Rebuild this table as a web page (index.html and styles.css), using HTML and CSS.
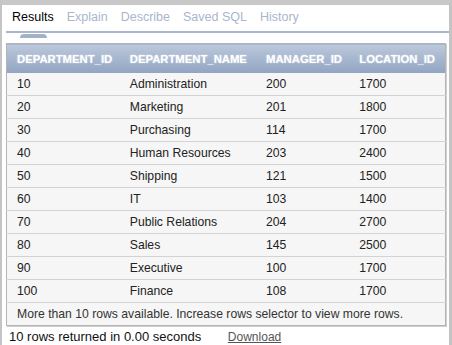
FILE: index.html
```html
<!DOCTYPE html>
<html lang="en">
<head>
  <meta charset="UTF-8">
  <title>Results</title>
  <link rel="stylesheet" href="styles.css">
</head>
<body>
  <div class="frame">
    <nav class="tabs">
      <span class="tab active">Results</span>
      <span class="tab">Explain</span>
      <span class="tab">Describe</span>
      <span class="tab">Saved SQL</span>
      <span class="tab">History</span>
    </nav>

    <table class="results">
      <colgroup>
        <col class="c1"><col class="c2"><col class="c3"><col class="c4">
      </colgroup>
      <thead>
        <tr>
          <th>DEPARTMENT_ID</th>
          <th>DEPARTMENT_NAME</th>
          <th>MANAGER_ID</th>
          <th>LOCATION_ID</th>
        </tr>
      </thead>
      <tbody>
        <tr><td>10</td><td>Administration</td><td>200</td><td>1700</td></tr>
        <tr><td>20</td><td>Marketing</td><td>201</td><td>1800</td></tr>
        <tr><td>30</td><td>Purchasing</td><td>114</td><td>1700</td></tr>
        <tr><td>40</td><td>Human Resources</td><td>203</td><td>2400</td></tr>
        <tr><td>50</td><td>Shipping</td><td>121</td><td>1500</td></tr>
        <tr><td>60</td><td>IT</td><td>103</td><td>1400</td></tr>
        <tr><td>70</td><td>Public Relations</td><td>204</td><td>2700</td></tr>
        <tr><td>80</td><td>Sales</td><td>145</td><td>2500</td></tr>
        <tr><td>90</td><td>Executive</td><td>100</td><td>1700</td></tr>
        <tr><td>100</td><td>Finance</td><td>108</td><td>1700</td></tr>
        <tr class="more"><td colspan="4">More than 10 rows available. Increase rows selector to view more rows.</td></tr>
      </tbody>
    </table>

    <div class="footer">
      <span>10 rows returned in 0.00 seconds</span>
      <a href="#" class="download">Download</a>
    </div>
  </div>
</body>
</html>
```

FILE: styles.css
```css
body {
  margin: 0;
  padding: 0;
  background: #fff;
  font-family: 'Liberation Sans', Arial, sans-serif;
  color: #222;
}

.frame {
  box-sizing: border-box;
  height: 345px;
  border-top: 5px solid #c8c8c8;
  border-left: 2px solid #c4c4c4;
  border-right: 3px solid #c4c4c4;
  background: #fff;
}

.tabs {
  position: relative;
  display: flex;
  gap: 13px;
  height: 21px;
  padding: 5px 0 0 6px;
  margin-left: 4px;
  border-bottom: 2px solid #a8b5ca;
  font-size: 12.5px;
  line-height: 14px;
}

.tab {
  position: relative;
  color: #a9b6cb;
}

.tab.active {
  color: #000;
}

.tab.active::after {
  content: "";
  position: absolute;
  left: 50%;
  bottom: -7px;
  width: 27px;
  height: 4px;
  margin-left: -13px;
  background: #a3b1c8;
  border-radius: 4px 4px 0 0;
}

.results {
  margin: 10px 0 0 4px;
  width: 440px;
  table-layout: fixed;
  border-collapse: collapse;
  border: 1px solid #b4b4b4;
  box-shadow: 1px 1px 0 #cfcfcf;
  font-size: 12.2px;
  line-height: 14px;
}

.c1 { width: 113px; }
.c2 { width: 136px; }
.c3 { width: 93px; }
.c4 { width: 96px; }

.results th {
  height: 29px;
  padding: 0 0 0 10px;
  text-align: left;
  font-size: 11.3px;
  font-weight: bold;
  color: #fff;
  white-space: nowrap;
  background: linear-gradient(to bottom, #bcc8db, #91a4c2);
  text-shadow: 0 0 2px rgba(255, 255, 255, 0.6);
}

.results td {
  height: 22px;
  padding: 0 0 0 10px;
  background: #f6f6f6;
  border-bottom: 1px solid #d3d3d3;
  white-space: nowrap;
  color: #222;
}

.results .more td {
  border-bottom: none;
  color: #333;
}

.footer {
  margin-top: 3px;
  padding-left: 7px;
  font-size: 13px;
  line-height: 15px;
  color: #111;
}

.download {
  margin-left: 23px;
  font-size: 12px;
  color: #555;
  text-decoration: underline;
}
```
